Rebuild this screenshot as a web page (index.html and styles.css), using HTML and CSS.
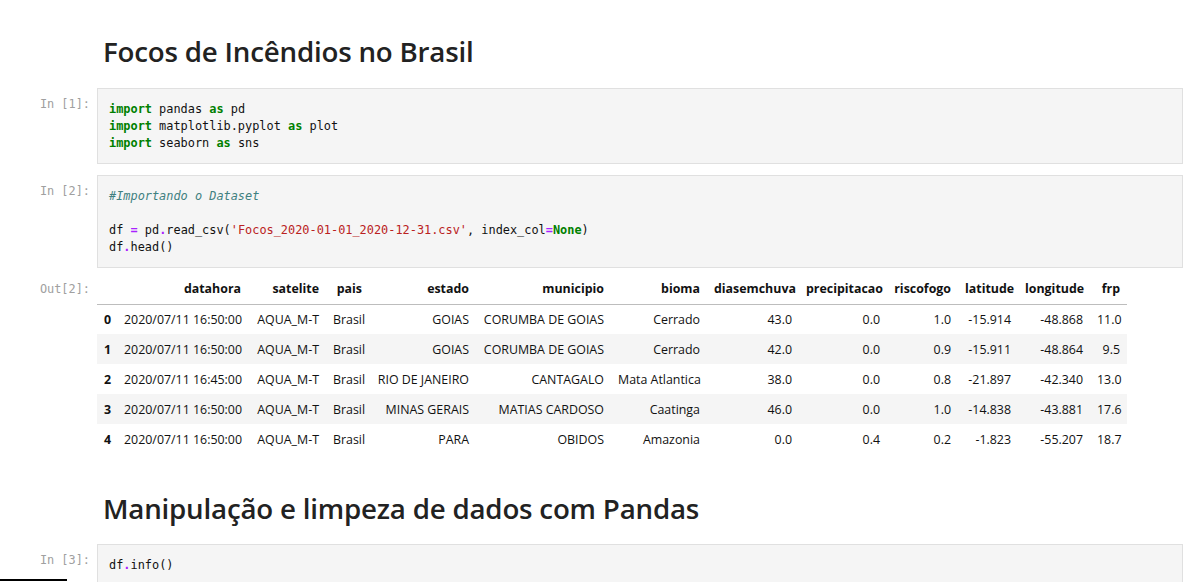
FILE: index.html
```html
<!DOCTYPE html>
<html lang="pt">
<head>
<meta charset="utf-8">
<title>Focos de Incêndios no Brasil</title>
<link rel="stylesheet" href="styles.css">
</head>
<body>
<div class="notebook">
  <div class="md-cell">
    <h1 class="md-h">Focos de Incêndios no Brasil</h1>
  </div>

  <div class="cell cell-1">
    <div class="prompt">In&nbsp;[1]:</div>
    <div class="input-area">
<pre class="code"><span class="k">import</span> pandas <span class="k">as</span> pd
<span class="k">import</span> matplotlib.pyplot <span class="k">as</span> plot
<span class="k">import</span> seaborn <span class="k">as</span> sns</pre>
    </div>
  </div>

  <div class="cell cell-2">
    <div class="prompt">In&nbsp;[2]:</div>
    <div class="input-area">
<pre class="code"><span class="c">#Importando o Dataset</span>

df <span class="o">=</span> pd<span class="o">.</span>read_csv(<span class="s">'Focos_2020-01-01_2020-12-31.csv'</span>, index_col<span class="o">=</span><span class="k">None</span>)
df<span class="o">.</span>head()</pre>
    </div>
  </div>

  <div class="cell out-cell">
    <div class="prompt out-prompt">Out[2]:</div>
    <div class="output-area">
      <table class="df">
        <thead>
          <tr><th></th><th>datahora</th><th>satelite</th><th>pais</th><th>estado</th><th>municipio</th><th>bioma</th><th>diasemchuva</th><th>precipitacao</th><th>riscofogo</th><th>latitude</th><th>longitude</th><th>frp</th></tr>
        </thead>
        <tbody>
          <tr><th>0</th><td>2020/07/11 16:50:00</td><td>AQUA_M-T</td><td>Brasil</td><td>GOIAS</td><td>CORUMBA DE GOIAS</td><td>Cerrado</td><td>43.0</td><td>0.0</td><td>1.0</td><td>-15.914</td><td>-48.868</td><td>11.0</td></tr>
          <tr><th>1</th><td>2020/07/11 16:50:00</td><td>AQUA_M-T</td><td>Brasil</td><td>GOIAS</td><td>CORUMBA DE GOIAS</td><td>Cerrado</td><td>42.0</td><td>0.0</td><td>0.9</td><td>-15.911</td><td>-48.864</td><td>9.5</td></tr>
          <tr><th>2</th><td>2020/07/11 16:45:00</td><td>AQUA_M-T</td><td>Brasil</td><td>RIO DE JANEIRO</td><td>CANTAGALO</td><td>Mata Atlantica</td><td>38.0</td><td>0.0</td><td>0.8</td><td>-21.897</td><td>-42.340</td><td>13.0</td></tr>
          <tr><th>3</th><td>2020/07/11 16:50:00</td><td>AQUA_M-T</td><td>Brasil</td><td>MINAS GERAIS</td><td>MATIAS CARDOSO</td><td>Caatinga</td><td>46.0</td><td>0.0</td><td>1.0</td><td>-14.838</td><td>-43.881</td><td>17.6</td></tr>
          <tr><th>4</th><td>2020/07/11 16:50:00</td><td>AQUA_M-T</td><td>Brasil</td><td>PARA</td><td>OBIDOS</td><td>Amazonia</td><td>0.0</td><td>0.4</td><td>0.2</td><td>-1.823</td><td>-55.207</td><td>18.7</td></tr>
        </tbody>
      </table>
    </div>
  </div>

  <div class="md-cell md-cell-2">
    <h2 class="md-h">Manipulação e limpeza de dados com Pandas</h2>
  </div>

  <div class="cell cell-3">
    <div class="prompt">In&nbsp;[3]:</div>
    <div class="input-area">
<pre class="code">df<span class="o">.</span>info()</pre>
    </div>
  </div>
</div>
<div class="hscroll"></div>
</body>
</html>
```

FILE: styles.css
```css
html, body {
  margin: 0;
  padding: 0;
  background: #ffffff;
}

body {
  font-family: "Open Sans", "Noto Sans", sans-serif;
  color: #000;
  overflow: hidden;
  height: 582px;
}

.notebook {
  display: flex;
  flex-direction: column;
}

.md-cell {
  padding-left: 103px;
}

.md-h {
  margin: 0;
  font-family: "Open Sans", "Noto Sans", sans-serif;
  font-weight: 600;
  font-size: 27.7px;
  line-height: 36px;
  color: #222;
  letter-spacing: -0.2px;
}

.md-cell:first-child {
  padding-top: 33px;
  height: 55px;
}

.md-cell-2 {
  margin-top: 36px;
  height: 54px;
  box-sizing: border-box;
  padding-top: 0;
}

.cell {
  display: flex;
  align-items: flex-start;
}

.cell-2 {
  margin-top: 11px;
}

.prompt {
  width: 90px;
  flex: none;
  text-align: right;
  font-family: "DejaVu Sans Mono", monospace;
  font-size: 11.9px;
  line-height: 17px;
  color: #a0a0a0;
  padding-top: 8px;
  white-space: nowrap;
}

.input-area {
  margin-left: 7px;
  width: 1062px;
  background: #f5f5f5;
  border: 1px solid #e0e0e0;
  padding: 12px 11px 11px 11px;
  box-sizing: content-box;
}

.cell-2 .input-area {
  padding-top: 12px;
  padding-bottom: 11px;
}

.code {
  margin: 0;
  font-family: "DejaVu Sans Mono", monospace;
  font-size: 11.9px;
  line-height: 17px;
  color: #111;
  white-space: pre;
}

.k { color: #008000; font-weight: bold; }
.o { color: #aa22ff; font-weight: bold; }
.s { color: #ba2121; }
.c { color: #408080; font-style: italic; }

.out-cell {
  margin-top: 6px;
}

.out-prompt {
  padding-top: 7px;
}

.output-area {
  margin-left: 7px;
}

.df {
  border-collapse: collapse;
  table-layout: fixed;
  width: 1030px;
  font-family: "Open Sans", "Noto Sans", sans-serif;
  font-size: 12.4px;
  color: #111;
}

.df th,
.df td {
  padding: 0 7px;
  height: 30px;
  text-align: right;
  white-space: nowrap;
  overflow: hidden;
  box-sizing: border-box;
}

.df th {
  font-weight: bold;
}

.df thead th {
  border-bottom: 1px solid #bdbdbd;
  vertical-align: middle;
}

.df tbody tr {
  background: #ffffff;
}

.df tbody tr:nth-child(even) {
  background: #f5f5f5;
}

.df th:nth-child(1) { width: 20px; }
.df th:nth-child(2) { width: 131px; }
.df th:nth-child(3) { width: 78px; }
.df th:nth-child(4) { width: 43px; }
.df th:nth-child(5) { width: 107px; }
.df th:nth-child(6) { width: 135px; }
.df th:nth-child(7) { width: 96px; }
.df th:nth-child(8) { width: 92px; }
.df th:nth-child(9) { width: 88px; }
.df th:nth-child(10) { width: 71px; }
.df th:nth-child(11) { width: 60px; }
.df th:nth-child(12) { width: 72px; }
.df th:nth-child(13) { width: 37px; }

.df tbody th {
  text-align: left;
}

.hscroll {
  position: fixed;
  left: 0;
  bottom: 1px;
  width: 67px;
  height: 2px;
  background: #000;
}
```
